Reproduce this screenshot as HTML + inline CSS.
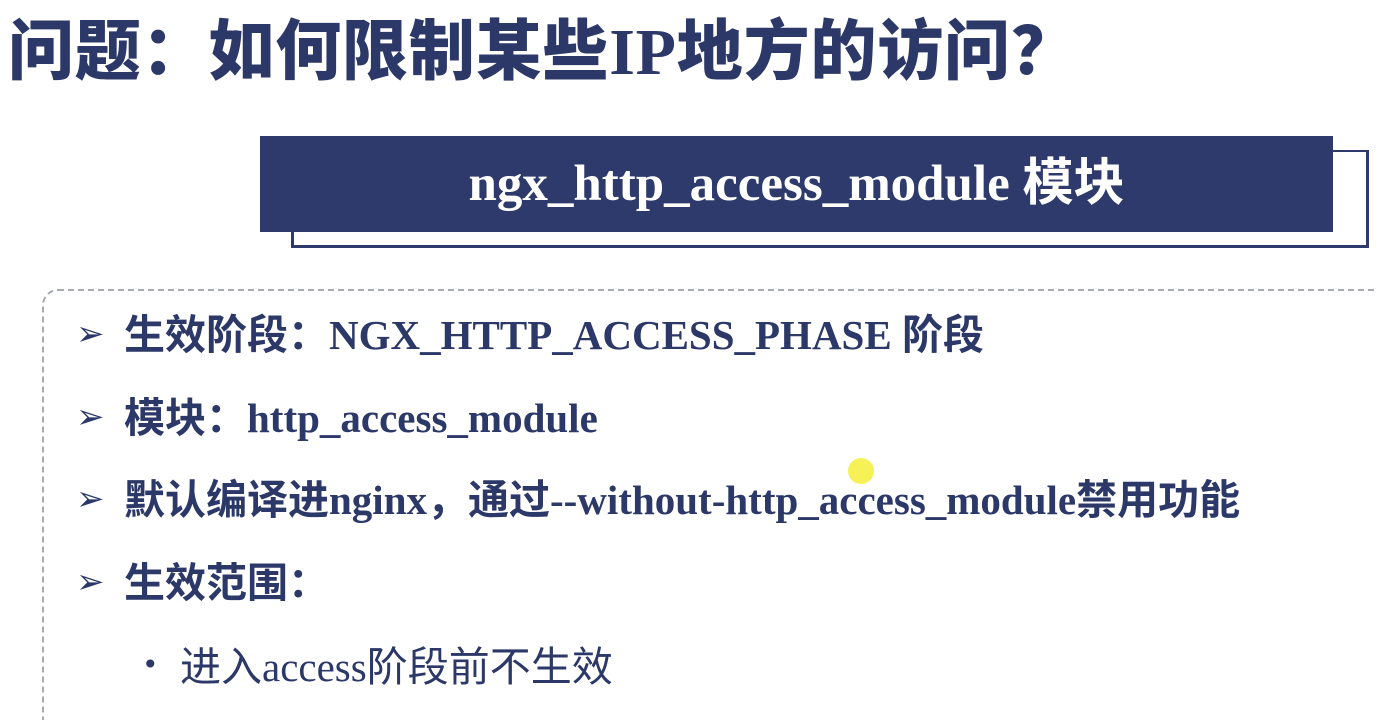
<!DOCTYPE html>
<html><head><meta charset="utf-8"><style>
html,body{margin:0;padding:0;background:#fff;width:1378px;height:720px;overflow:hidden;position:relative}
.t{position:absolute;white-space:nowrap;color:#2b3868}
#title{left:8px;top:10px;font-family:"Liberation Serif","Noto Sans CJK SC",sans-serif;font-weight:900;font-size:66px;line-height:86px;letter-spacing:0.8px}
#outline{position:absolute;left:291px;top:150px;width:1072px;height:93px;border:3px solid #2d3a6b;border-top-width:2px}
#box{position:absolute;left:260px;top:136px;width:1073px;height:96px;background:#2d3a6b}
#boxt{position:absolute;left:260px;top:136px;width:1073px;height:96px;line-height:96px;text-align:center;color:#fff;font-family:"Liberation Serif","Noto Sans CJK SC",sans-serif;font-weight:bold;font-size:51px}
#dash{position:absolute;left:42px;top:289px;width:1400px;height:429px;border:2px dashed #a7a9b4;border-bottom:none;border-radius:16px 16px 0 0}
.li{font-family:"Liberation Serif","Noto Sans CJK SC",sans-serif;font-weight:bold;font-size:41px;line-height:48px}
.ar{position:absolute;left:76px;color:#2b3868;font-family:"DejaVu Sans",sans-serif;font-size:34px;font-weight:bold;line-height:36px}
</style></head><body>
<div id="title" class="t">问题：如何限制某些IP地方的访问？</div>
<div id="outline"></div>
<div id="box"></div>
<div id="boxt">ngx_http_access_module 模块</div>
<div id="dash"></div>
<div class="ar" style="top:316px">➢</div>
<div class="t li" style="left:124px;top:311px">生效阶段：NGX_HTTP_ACCESS_PHASE 阶段</div>
<div class="ar" style="top:399px">➢</div>
<div class="t li" style="left:124px;top:394px">模块：http_access_module</div>
<div class="ar" style="top:481px">➢</div>
<div class="t li" style="left:124px;top:476px">默认编译进nginx，通过--without-http_access_module禁用功能</div>
<div class="ar" style="top:564px">➢</div>
<div class="t li" style="left:124px;top:559px">生效范围：</div>
<div class="t" style="left:142px;top:650px;font-size:28px;line-height:30px;font-family:'DejaVu Sans',sans-serif">•</div>
<div class="t" style="left:180px;top:643px;font-family:'Liberation Serif','Noto Sans CJK SC',sans-serif;font-size:41px;line-height:48px">进入access阶段前不生效</div>
<div style="position:absolute;left:848px;top:458px;width:26px;height:26px;border-radius:50%;background:#f4ee3a;opacity:.85"></div>
</body></html>
